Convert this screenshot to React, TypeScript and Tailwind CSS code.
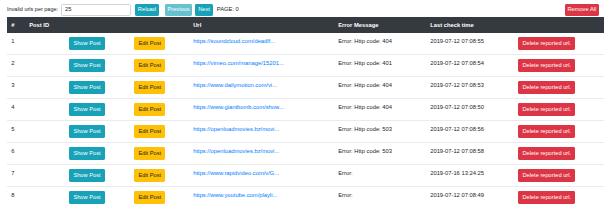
import React from 'react';

interface ReportedUrl {
  id: number;
  url: string;
  error: string;
  checkedAt: string;
}

const rows: ReportedUrl[] = [
  { id: 1, url: 'https://soundcloud.com/deadlf...', error: 'Error: Http code: 404', checkedAt: '2019-07-12 07:08:55' },
  { id: 2, url: 'https://vimeo.com/manage/15201...', error: 'Error: Http code: 401', checkedAt: '2019-07-12 07:08:54' },
  { id: 3, url: 'https://www.dailymotion.com/vi...', error: 'Error: Http code: 404', checkedAt: '2019-07-12 07:08:53' },
  { id: 4, url: 'https://www.giantbomb.com/show...', error: 'Error: Http code: 404', checkedAt: '2019-07-12 07:08:50' },
  { id: 5, url: 'https://openloadmovies.bz/movi...', error: 'Error: Http code: 503', checkedAt: '2019-07-12 07:08:56' },
  { id: 6, url: 'https://openloadmovies.bz/movi...', error: 'Error: Http code: 503', checkedAt: '2019-07-12 07:08:58' },
  { id: 7, url: 'https://www.rapidvideo.com/v/G...', error: 'Error:', checkedAt: '2019-07-16 13:24:25' },
  { id: 8, url: 'https://www.youtube.com/playli...', error: 'Error:', checkedAt: '2019-07-12 07:08:49' },
];

const btn = 'flex items-center h-[13px] rounded-[1.4px] px-[4.2px] text-[5.7px] leading-none whitespace-nowrap';
const topBtn = 'flex items-center h-[12px] rounded-[1.4px] px-[2.8px] text-[5.7px] leading-none whitespace-nowrap text-white';
const cell = 'px-[4.2px] py-[4px] align-top text-left';

export default function App() {
  return (
    <div className="w-[609px] h-[220px] bg-white overflow-hidden text-[#212529] text-[5.8px] leading-[8.4px] font-['Liberation_Sans',Arial,sans-serif]">
      <div className="px-[7px] pt-[3px]">
        <div className="flex items-center h-[13px]">
          <label className="mr-[3px] text-[5.5px]">Invalid urls per page:</label>
          <div className="w-[70px] h-[12px] border-[0.5px] border-[#ced4da] rounded-[1.4px] px-[3px] flex items-center">
            <span>25</span>
          </div>
          <button className={`${topBtn} bg-[#17a2b8] ml-[4px]`}>Reload</button>
          <button className={`${topBtn} bg-[#17a2b8] opacity-65 ml-[6px]`}>Previous</button>
          <button className={`${topBtn} bg-[#17a2b8] ml-[3px]`}>Next</button>
          <span className="ml-[4px]">PAGE: 0</span>
          <button className={`${topBtn} bg-[#dc3545] ml-auto mr-[3px]`}>Remove All</button>
        </div>

        <table className="w-[597px] mt-[1px] border-collapse table-fixed">
          <colgroup>
            <col className="w-[18px]" />
            <col className="w-[40px]" />
            <col className="w-[65px]" />
            <col className="w-[59px]" />
            <col className="w-[145px]" />
            <col className="w-[92px]" />
            <col className="w-[88px]" />
            <col className="w-[90px]" />
          </colgroup>
          <thead>
            <tr className="bg-[#343a40] text-white font-bold">
              <th className={cell}>#</th>
              <th className={cell}>Post ID</th>
              <th className={cell}></th>
              <th className={cell}></th>
              <th className={cell}>Url</th>
              <th className={cell}>Error Message</th>
              <th className={cell}>Last check time</th>
              <th className={cell}></th>
            </tr>
          </thead>
          <tbody>
            {rows.map((row, i) => (
              <tr key={row.id} className={i > 0 ? 'border-t border-[#e9ecef]' : ''}>
                <td className={cell}>{row.id}</td>
                <td className={cell}></td>
                <td className={cell}>
                  <button className={`${btn} bg-[#17a2b8] text-white`}>Show Post</button>
                </td>
                <td className={cell}>
                  <button className={`${btn} bg-[#ffc107] text-[#212529]`}>Edit Post</button>
                </td>
                <td className={`${cell} whitespace-nowrap`}>
                  <a className="text-[#007bff]">{row.url}</a>
                </td>
                <td className={`${cell} whitespace-nowrap`}>{row.error}</td>
                <td className={`${cell} whitespace-nowrap`}>{row.checkedAt}</td>
                <td className={cell}>
                  <button className={`${btn} bg-[#dc3545] text-white`}>Delete reported url.</button>
                </td>
              </tr>
            ))}
          </tbody>
        </table>
      </div>
    </div>
  );
}
